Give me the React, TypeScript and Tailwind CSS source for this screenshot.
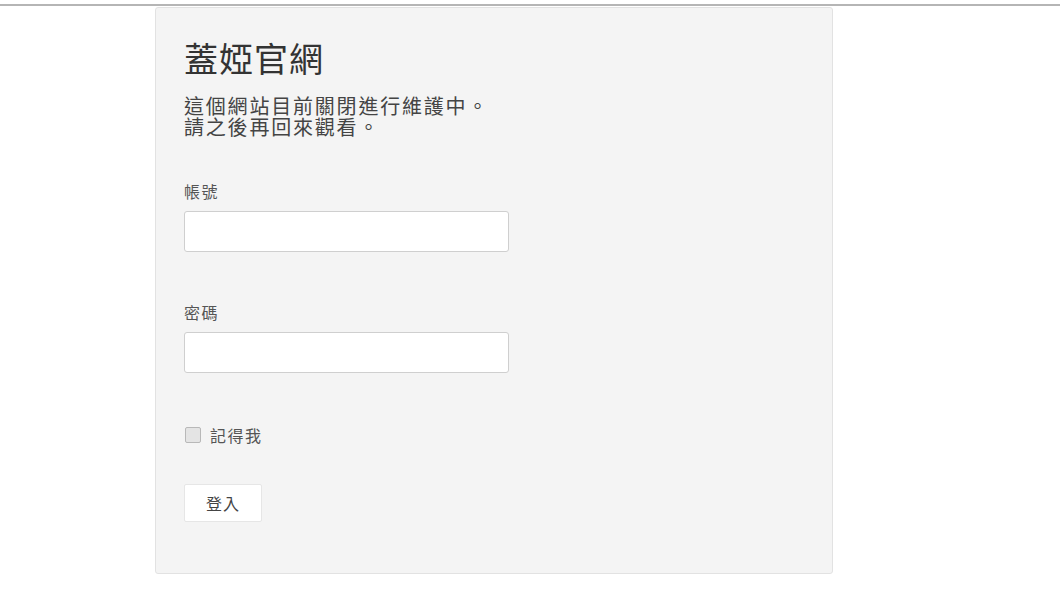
import { useState } from 'react';

const FONT = '"Noto Sans CJK TC", "Noto Sans", "Liberation Sans", sans-serif';

export default function App() {
  const [remember, setRemember] = useState(false);

  return (
    <div className="min-h-[596px] w-full bg-white" style={{ fontFamily: FONT }}>
      <div className="h-[4px]" />
      <div className="h-[2px] bg-[#b5b5b5]" />
      <div className="ml-[155px] mt-[1px] h-[567px] w-[678px] rounded-[3px] border border-[#e2e2e2] bg-[#f4f4f4] pl-[28px] pt-[30px]">
        <h1 className="text-[34px] leading-[40px] tracking-[1px] text-[#333]">蓋婭官網</h1>
        <div className="mt-[17px] text-[20px] tracking-[1.8px] text-[#444]">
          <div className="h-[21px] leading-[21px]">這個網站目前關閉進行維護中。</div>
          <div className="h-[21px] leading-[21px]">請之後再回來觀看。</div>
        </div>

        <label className="mt-[44px] block text-[16px] leading-[20px] tracking-[1.5px] text-[#555]">帳號</label>
        <input
          type="text"
          className="mt-[10px] block h-[41px] w-[325px] rounded-[3px] border border-[#cfcfcf] bg-white px-2 outline-none"
        />

        <label className="mt-[50px] block text-[16px] leading-[20px] tracking-[1.5px] text-[#555]">密碼</label>
        <input
          type="password"
          className="mt-[10px] block h-[41px] w-[325px] rounded-[3px] border border-[#cfcfcf] bg-white px-2 outline-none"
        />

        <label className="mt-[52px] flex h-[20px] items-center gap-[9px] text-[16px] tracking-[1.5px] text-[#555]">
          <span
            onClick={() => setRemember(!remember)}
            className="ml-[1px] block h-[16px] w-[16px] rounded-[2px] border border-[#b8b8b8] bg-[#e4e4e4]"
          />
          記得我
        </label>

        <button className="mt-[39px] h-[38px] w-[78px] rounded-[2px] border border-[#e6e6e6] bg-white text-[16px] tracking-[1px] text-[#444]">
          登入
        </button>
      </div>
    </div>
  );
}
